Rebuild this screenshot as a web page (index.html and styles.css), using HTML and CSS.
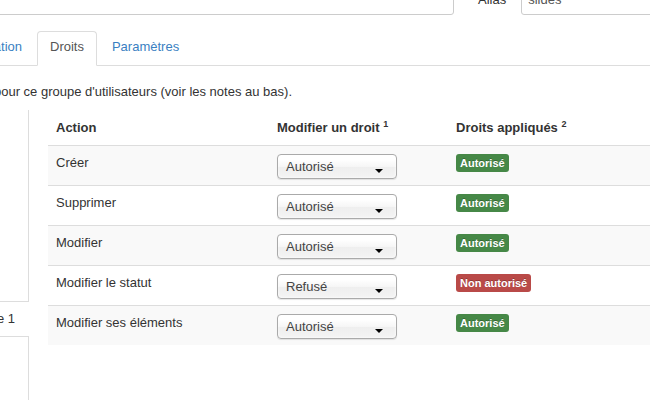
FILE: index.html
```html
<!DOCTYPE html>
<html lang="fr">
<head>
<meta charset="utf-8">
<title>Droits</title>
<link rel="stylesheet" href="styles.css">
</head>
<body>
<div class="page">
  <div class="topbar">
    <div class="input input-title"></div>
    <label class="alias-label">Alias</label>
    <div class="input input-alias">slides</div>
  </div>

  <ul class="tabs">
    <li class="tab cut"><a href="#">Publication</a></li>
    <li class="tab active"><a href="#">Droits</a></li>
    <li class="tab"><a href="#">Paramètres</a></li>
  </ul>

  <div class="desc"><span>Gérer les paramètres de droits ci-dessous pour ce groupe d'utilisateurs (voir les notes au bas).</span></div>

  <div class="perm">
    <div class="side">
      <div class="side-box first"></div>
      <div class="side-label"><span>Groupe 1</span></div>
      <div class="side-box second"></div>
    </div>

    <table class="rights">
      <colgroup>
        <col class="c1"><col class="c2"><col class="c3">
      </colgroup>
      <thead>
        <tr>
          <th>Action</th>
          <th>Modifier un droit <sup>1</sup></th>
          <th>Droits appliqués <sup>2</sup></th>
        </tr>
      </thead>
      <tbody>
        <tr>
          <td>Créer</td>
          <td><div class="select"><span>Autorisé</span><b class="caret"></b></div></td>
          <td><span class="badge ok">Autorisé</span></td>
        </tr>
        <tr>
          <td>Supprimer</td>
          <td><div class="select"><span>Autorisé</span><b class="caret"></b></div></td>
          <td><span class="badge ok">Autorisé</span></td>
        </tr>
        <tr>
          <td>Modifier</td>
          <td><div class="select"><span>Autorisé</span><b class="caret"></b></div></td>
          <td><span class="badge ok">Autorisé</span></td>
        </tr>
        <tr>
          <td>Modifier le statut</td>
          <td><div class="select"><span>Refusé</span><b class="caret"></b></div></td>
          <td><span class="badge no">Non autorisé</span></td>
        </tr>
        <tr>
          <td>Modifier ses éléments</td>
          <td><div class="select"><span>Autorisé</span><b class="caret"></b></div></td>
          <td><span class="badge ok">Autorisé</span></td>
        </tr>
      </tbody>
    </table>
  </div>
</div>
</body>
</html>
```

FILE: styles.css
```css
html, body {
  margin: 0;
  padding: 0;
  overflow: hidden;
  background: #fff;
}

body {
  font-family: "Liberation Sans", Arial, sans-serif;
  font-size: 13px;
  line-height: 18px;
  color: #333;
}

.page {
  width: 650px;
  height: 400px;
  overflow: hidden;
}

/* top form row */
.topbar {
  display: flex;
  align-items: flex-start;
  margin-top: -13px;
  height: 28px;
}

.input {
  box-sizing: border-box;
  height: 28px;
  border: 1px solid #ccc;
  border-radius: 3px;
  padding: 3px 6px;
  color: #555;
  background: #fff;
  flex-shrink: 0;
  white-space: nowrap;
}

.input-title {
  width: 470px;
  margin-left: -16px;
}

.alias-label {
  padding-top: 4px;
  margin: 0 15px 0 24px;
  color: #333;
}

.input-alias {
  width: 200px;
}

/* tabs */
.tabs {
  display: flex;
  list-style: none;
  margin: 16px 0 0 0;
  padding: 0;
  border-bottom: 1px solid #ddd;
}

.tab {
  margin-bottom: -1px;
  margin-right: 2px;
}

.tab a {
  display: block;
  padding: 6px 12px 9px;
  line-height: 18px;
  border: 1px solid transparent;
  border-radius: 4px 4px 0 0;
  color: #3a7fc2;
  text-decoration: none;
  white-space: nowrap;
  flex-shrink: 0;
}

.tab.cut {
  width: 35px;
  display: flex;
  justify-content: flex-end;
}

.tab.active a {
  color: #555;
  background: #fff;
  border-color: #ddd #ddd transparent;
}

/* description */
.desc {
  width: 292px;
  display: flex;
  justify-content: flex-end;
  margin-top: 17px;
  white-space: nowrap;
}

.desc span {
  flex-shrink: 0;
}

/* permissions area */
.perm {
  display: flex;
  align-items: flex-start;
  gap: 19px;
  margin-top: 9px;
}

.side {
  width: 29px;
  flex-shrink: 0;
}

.side-box {
  box-sizing: border-box;
  border-right: 1px solid #ddd;
}

.side-box.first {
  height: 192px;
  border-bottom: 1px solid #ddd;
}

.side-box.second {
  height: 120px;
  margin-top: 8px;
  border-top: 1px solid #ddd;
}

.side-label {
  width: 15px;
  display: flex;
  justify-content: flex-end;
  margin-top: 8px;
  white-space: nowrap;
}

.side-label span {
  flex-shrink: 0;
}

/* table */
.rights {
  margin-top: 1px;
  width: 620px;
  flex-shrink: 0;
  table-layout: fixed;
  border-collapse: collapse;
  border-spacing: 0;
}

.rights col.c1 { width: 221px; }
.rights col.c2 { width: 179px; }
.rights col.c3 { width: 220px; }

.rights th {
  text-align: left;
  font-weight: bold;
  padding: 8px;
  line-height: 18px;
  vertical-align: top;
}

.rights sup {
  font-size: 9px;
  line-height: 0;
  vertical-align: 5px;
}

.rights td {
  padding: 8px 8px 6px;
  line-height: 18px;
  vertical-align: top;
  border-top: 1px solid #ddd;
}

.rights tbody tr:nth-child(odd) td {
  background: #f9f9f9;
}

/* fake select (chosen) */
.select {
  box-sizing: border-box;
  width: 120px;
  height: 25px;
  display: flex;
  justify-content: space-between;
  align-items: flex-start;
  padding: 3px 13px 2px 8px;
  border: 1px solid #aaa;
  border-radius: 4px;
  background: linear-gradient(#ffffff 20%, #f6f6f6 50%, #eeeeee 52%, #f4f4f4 100%);
  box-shadow: 0 0 3px #fff inset, 0 1px 1px rgba(0, 0, 0, 0.1);
  color: #444;
}

.caret {
  width: 0;
  height: 0;
  margin-top: 11px;
  border-left: 4px solid transparent;
  border-right: 4px solid transparent;
  border-top: 4px solid #000;
}

/* badges */
.badge {
  display: inline-block;
  padding: 2px 4px;
  font-size: 11px;
  line-height: 14px;
  font-weight: bold;
  color: #fff;
  border-radius: 3px;
  text-shadow: 0 -1px 0 rgba(0, 0, 0, 0.25);
  white-space: nowrap;
}

.badge.ok { background: #468847; }
.badge.no { background: #b94a48; }
```
